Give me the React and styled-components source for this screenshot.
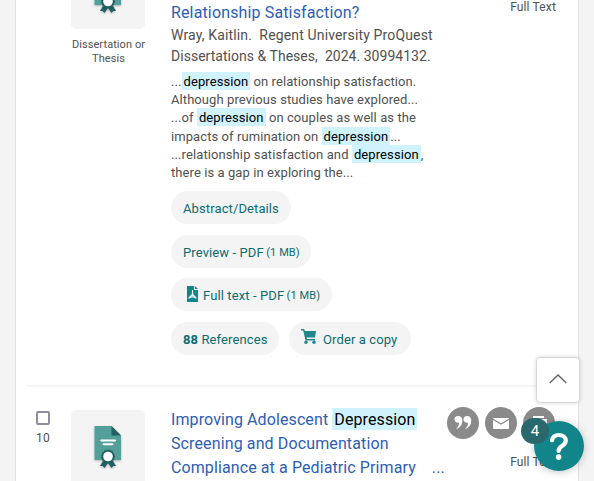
import React from "react";
import styled, { createGlobalStyle } from "styled-components";

const Global = createGlobalStyle`
  * { box-sizing: border-box; }
  html, body { margin: 0; height: 481px; overflow: hidden; background: #f4f4f5; }
  body { font-family: Roboto, "Liberation Sans", sans-serif; color: #505050; }
`;

const Page = styled.div`
  height: 481px;
  padding: 0 15px;
  overflow: hidden;
`;

const Card = styled.main`
  height: 481px;
  overflow: hidden;
  padding: 0 10px;
  background: #fff;
  border: solid #e2e2e3;
  border-width: 0 1px;
`;

const Result = styled.article`
  display: grid;
  grid-template-columns: 34px 11px 74px 26px 276px 1fr;
  height: ${(p) => p.$height}px;
  padding-top: ${(p) => p.$top || 0}px;
`;

const Divider = styled.hr`
  height: 2px;
  margin: 0;
  border: 0;
  background: #f4f4f4;
`;

const SelectColumn = styled.div`
  grid-column: 1;
  display: flex;
  flex-direction: column;
  align-items: center;
  padding-top: 4px;
`;

const Checkbox = styled.span`
  width: 14px;
  height: 14px;
  border: 2px solid #8f8d9d;
  border-radius: 2px;
`;

const Index = styled.span`
  margin-top: 5px;
  font-size: 12px;
  line-height: 16px;
  letter-spacing: 0.2px;
`;

const ThumbColumn = styled.div`
  grid-column: 3;
  padding-top: ${(p) => p.$top || 0}px;
`;

const Thumb = styled.div`
  display: flex;
  justify-content: center;
  height: 74px;
  margin-top: ${(p) => p.$shift || 0}px;
  padding-top: 13px;
  background: #f4f4f4;
  border-radius: 5px;
`;

const ThumbLabel = styled.div`
  margin: 9px -6px 0 -5px;
  text-align: center;
  font-size: 11px;
  line-height: 14px;
  letter-spacing: 0.08px;
`;

const Content = styled.div`
  grid-column: 5;
  padding-top: 1px;
  white-space: nowrap;
`;

const Title = styled.h3`
  margin: 0;
  color: #2d5db5;
  font-size: 16px;
  font-weight: 400;
  line-height: 24px;
  letter-spacing: 0.14px;
`;

const Line = styled.div`
  white-space: pre;
  letter-spacing: ${(p) => p.$track}px;
`;

const Mark = styled.mark`
  padding: ${(p) => (p.$large ? "2px 2px 1px" : "2px 2px 1px")};
  background: #d0f2fc;
  color: #000;
`;

const Ellipsis = styled.span`
  margin-left: 16px;
`;

const Meta = styled.div`
  font-size: 14px;
  line-height: 21px;
`;

const Snippets = styled.div`
  padding-top: 6px;
  font-size: 13px;
  line-height: 18.2px;
`;

const Actions = styled.div`
  display: flex;
  flex-direction: column;
  gap: 10.6px;
  margin-top: 9px;
`;

const ActionRow = styled.div`
  display: flex;
  gap: 10px;
`;

const Chip = styled.span`
  display: flex;
  align-items: center;
  width: ${(p) => p.$width}px;
  height: 33px;
  padding-top: 1.5px;
  padding-left: ${(p) => p.$pad || 12}px;
  border-radius: 17px;
  background: #f4f4f4;
  color: #0c6b70;
  font-size: 13px;
  letter-spacing: 0.11px;
  white-space: pre;
  svg { flex: none; }
  small { margin-left: -1px; font-size: 11px; letter-spacing: 0.1px; }
`;

const Side = styled.div`
  grid-column: 6;
  justify-self: end;
  margin-top: ${(p) => p.$shift || 0}px;
  padding-right: 12px;
  font-size: 12px;
  line-height: 16px;
  letter-spacing: 0.15px;
  white-space: nowrap;
`;

const Tools = styled.div`
  display: flex;
  gap: 6px;
  margin: 0 0 15px -63px;
`;

const Tool = styled.span`
  display: flex;
  align-items: center;
  justify-content: center;
  width: 32px;
  height: 32px;
  border-radius: 50%;
  background: #8a8a8a;
`;

const ScrollTop = styled.button`
  position: fixed;
  left: 536px;
  top: 357px;
  display: flex;
  align-items: center;
  justify-content: center;
  width: 44px;
  height: 46px;
  padding: 0 0 2px;
  border: 1px solid #d8d8d8;
  border-radius: 4px;
  background: #fff;
  box-shadow: 0 0 4px rgba(0, 0, 0, 0.16);
`;

const Help = styled.button`
  position: fixed;
  left: 534px;
  top: 421px;
  display: flex;
  align-items: center;
  justify-content: center;
  width: 50px;
  height: 50px;
  padding: 0;
  border: 0;
  border-radius: 50%;
  background: #12858b;
  box-shadow: 0 1px 8px rgba(0, 0, 0, 0.22);
`;

const Count = styled.span`
  position: fixed;
  left: 521px;
  top: 418px;
  width: 28px;
  height: 26px;
  border-radius: 13px;
  background: #29686c;
  color: #fff;
  font-size: 15px;
  line-height: 26px;
  text-align: center;
`;

function DissertationIcon() {
  return (
    <svg width="36" height="50" viewBox="0 0 36 50">
      <defs>
        <filter id="soft" x="-20%" y="-20%" width="150%" height="150%">
          <feDropShadow dx="0" dy="1" stdDeviation="1" floodOpacity="0.28" />
        </filter>
      </defs>
      <g filter="url(#soft)">
        <path d="M4.5 3H21.5L31 12.5V37H4.5Z" fill="#559f9b" />
        <path d="M21.5 3L31 12.5H21.5Z" fill="#205e60" />
        <path d="M13 38L10 43l2.8-.1 1.7 2.1 3.5-5 3.5 5 1.7-2.1 2.8.1-3-5Z" fill="#205e60" />
        <circle cx="18" cy="33.5" r="6.3" fill="#205e60" stroke="#205e60" strokeWidth="1.4" strokeDasharray="1.5 1" />
      </g>
      <circle cx="18" cy="33.5" r="4.8" fill="#fff" />
      <path d="M11.3 17.5H25M13.5 21.3H22.5" stroke="#fff" strokeWidth="2" strokeLinecap="round" />
    </svg>
  );
}

const FileIcon = styled.svg`
  margin: -4px 5px 0 0;
`;

const CartIcon = styled.svg`
  margin: -5px 7px 0 0;
`;

export default function App() {
  return (
    <>
      <Global />
      <Page>
        <Card>
          <Result $height={385}>
            <ThumbColumn>
              <Thumb $shift={-45}>
                <DissertationIcon />
              </Thumb>
              <ThumbLabel>Dissertation or<br />Thesis</ThumbLabel>
            </ThumbColumn>
            <Content>
              <Title>Relationship Satisfaction?</Title>
              <Meta>
                <Line $track={0.15}>Wray, Kaitlin.{"  "}Regent University ProQuest</Line>
                <Line $track={0.03}>Dissertations &amp; Theses,{"  "}2024. 30994132.</Line>
              </Meta>
              <Snippets>
                <Line $track={0.08}>...<Mark>depression</Mark> on relationship satisfaction.</Line>
                <Line $track={0.08}>Although previous studies have explored...</Line>
                <Line $track={0.08}>...of <Mark>depression</Mark> on couples as well as the</Line>
                <Line $track={0.08}>impacts of rumination on <Mark>depression</Mark>...</Line>
                <Line $track={0.1}>...relationship satisfaction and <Mark>depression</Mark>,</Line>
                <Line $track={0.08}>there is a gap in exploring the...</Line>
              </Snippets>
              <Actions>
                <Chip $width={120}>Abstract/Details</Chip>
                <Chip $width={140}>Preview - PDF <small>(1 MB)</small></Chip>
                <Chip $width={161} $pad={16}>
                  <FileIcon width="11" height="16" viewBox="0 0 11 16">
                    <path d="M0 0H7V4H11V16H0Z" fill="#12858b" />
                    <path d="M8 0L11 3H8Z" fill="#12858b" />
                    <path d="M5.5 4.5v3.7M5.5 8.2L2 12M5.5 8.2L9 12M2 12q3.5-2.2 7 0" stroke="#e8f5f5" strokeWidth="1.2" fill="none" strokeLinecap="round" />
                  </FileIcon>
                  Full text - PDF <small>(1 MB)</small>
                </Chip>
                <ActionRow>
                  <Chip $width={108}><b>88</b> References</Chip>
                  <Chip $width={122}>
                    <CartIcon width="15" height="15" viewBox="0 0 15 15" fill="#23858b">
                      <path d="M0 0H3.2L3.8 2H15L14 8.5H5.7L6 10H14V11.5H4.5L2.2 1.5H0Z" />
                      <circle cx="5" cy="13.2" r="1.7" />
                      <circle cx="13" cy="13.2" r="1.7" />
                    </CartIcon>
                    Order a copy
                  </Chip>
                </ActionRow>
              </Actions>
            </Content>
            <Side $shift={-1}>Full Text</Side>
          </Result>
          <Divider />
          <Result $height={94} $top={20}>
            <SelectColumn>
              <Checkbox />
              <Index>10</Index>
            </SelectColumn>
            <ThumbColumn $top={3}>
              <Thumb><DissertationIcon /></Thumb>
            </ThumbColumn>
            <Content>
              <Title>
                <Line $track={0.1}>Improving Adolescent <Mark $large>Depression</Mark></Line>
                <Line $track={0.12}>Screening and Documentation</Line>
                <Line $track={0.1}>Compliance at a Pediatric Primary<Ellipsis>...</Ellipsis></Line>
              </Title>
            </Content>
            <Side>
              <Tools>
                <Tool>
                  <svg width="18" height="16" viewBox="0 0 18 16" fill="#fff">
                    <path d="M4.2 1a3.4 3.4 0 1 0 1 6.5Q5 11.5 1.5 14.5q6.8-2.5 6.8-9Q8.2 1 4.2 1Z" />
                    <path d="M13.2 1a3.4 3.4 0 1 0 1 6.5Q14 11.5 10.5 14.5q6.8-2.5 6.8-9Q17.2 1 13.2 1Z" />
                  </svg>
                </Tool>
                <Tool>
                  <svg width="16" height="11" viewBox="0 0 16 11">
                    <rect width="16" height="11" rx="1" fill="#fff" />
                    <path d="M0 1.2L8 6L16 1.2" fill="none" stroke="#8a8a8a" strokeWidth="1.3" />
                  </svg>
                </Tool>
                <Tool>
                  <svg width="16" height="14" viewBox="0 0 16 14" fill="none" stroke="#fff" strokeWidth="1.8">
                    <path d="M3 12V1H13M6 4H15V13H6Z" />
                  </svg>
                </Tool>
              </Tools>
              Full Text
            </Side>
          </Result>
        </Card>
      </Page>
      <ScrollTop aria-label="Back to top">
        <svg width="18" height="10" viewBox="0 0 18 10" fill="none" stroke="#646464" strokeWidth="1.4">
          <path d="M.7 9L9 1L17.3 9" />
        </svg>
      </ScrollTop>
      <Help aria-label="Help">
        <svg width="20" height="28" viewBox="0 0 20 28">
          <path d="M3 8.2C3.8 4.6 6.3 3 9.8 3C14 3 16.8 5.2 16.8 8.8C16.8 14 9.6 13.6 9.6 19" fill="none" stroke="#fff" strokeWidth="4.2" strokeLinecap="round" />
          <circle cx="9.6" cy="25.1" r="2.8" fill="#fff" />
        </svg>
      </Help>
      <Count>4</Count>
    </>
  );
}
